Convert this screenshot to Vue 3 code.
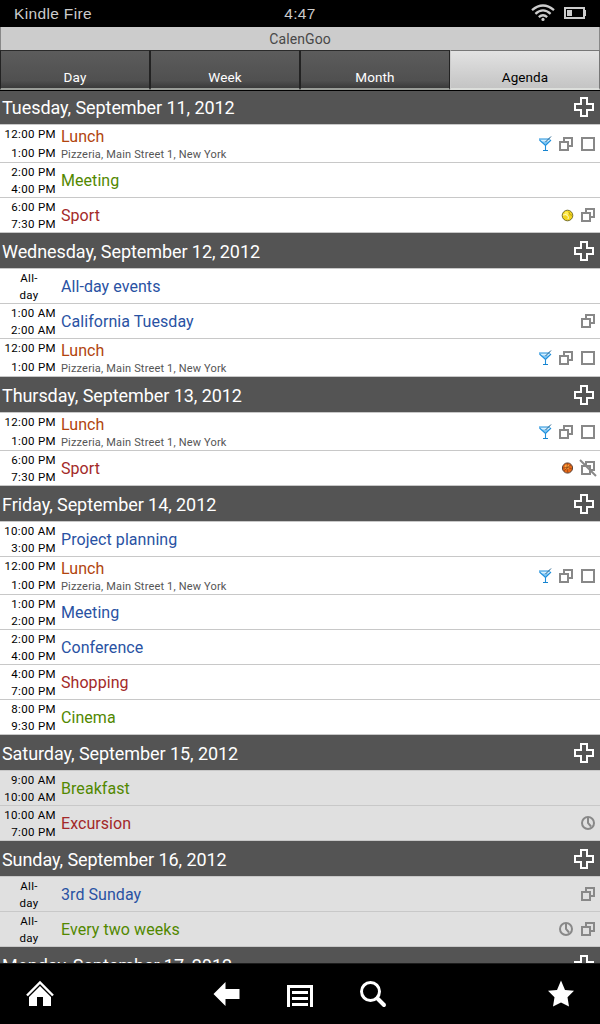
<template>
  <div class="device">
    <div class="status">
      <span class="name">Kindle Fire</span>
      <span class="clock">4:47</span>
      <div class="status-icons">
        <svg class="wifi" viewBox="0 0 24 18" width="24" height="18">
          <g fill="none" stroke="#ccc" stroke-width="2.3">
            <path d="M1 6.2Q12 -3.2 23 6.2" />
            <path d="M4.4 9.8Q12 3 19.6 9.8" />
            <path d="M7.8 13.2Q12 9.4 16.2 13.2" />
          </g>
          <circle cx="12" cy="15.4" r="1.6" fill="#ccc" />
        </svg>
        <svg class="battery" viewBox="0 0 22 12" width="22" height="12">
          <path d="M1 1H20V11H1Z" fill="none" stroke="#ccc" stroke-width="2" />
          <path d="M3 3H8V9H3ZM20 3H22V9H20Z" fill="#ccc" />
        </svg>
      </div>
    </div>
    <div class="title">CalenGoo</div>
    <div class="tabs">
      <div
        v-for="tab in tabs"
        :key="tab"
        class="tab"
        :class="{ active: tab === current }"
        @click="current = tab"
      >
        {{ tab }}
      </div>
    </div>

    <div class="agenda">
      <div v-for="day in days" :key="day.date" class="day" :class="{ weekend: day.weekend }">
        <div class="day-head">
          <span>{{ day.date }}</span>
          <svg viewBox="0 0 20 20" width="20" height="20">
            <path
              d="M7 1H13V7H19V13H13V19H7V13H1V7H7Z"
              fill="none"
              stroke="#fff"
              stroke-width="2"
            />
          </svg>
        </div>
        <div v-for="(ev, i) in day.events" :key="i" class="event" :class="{ tall: ev.place }">
          <div class="time" :class="{ allday: !ev.from }">
            <span>{{ ev.from || "All-" }}</span>
            <span>{{ ev.to || "day" }}</span>
          </div>
          <div class="info">
            <div class="name" :class="ev.color">{{ ev.name }}</div>
            <div v-if="ev.place" class="place">{{ ev.place }}</div>
          </div>
          <div class="icons">
            <svg v-for="icon in ev.icons" :key="icon" viewBox="0 0 14 14" width="14" height="14">
              <!-- cocktail glass -->
              <g v-if="icon === 'drink'">
                <path d="M2 2H14L9 8V13H8V8Z" fill="#d5efff" />
                <path d="M4.5 4.5H12L8.5 8Z" fill="#7cc4f3" />
                <path d="M2 2H13M2.5 3L8.5 8.5L14 3M8.5 8V14" fill="none" stroke="#1e8fdc" stroke-width="1.1" />
                <path d="M6 13.5H11" stroke="#1583cf" />
                <path d="M8.5 5L14 -0.5" stroke="#24618d" />
              </g>
              <g v-else-if="icon === 'copy' || icon === 'nocopy'" fill="none" stroke="#888" stroke-width="2">
                <path d="M1 5H9V13H1Z" />
                <path d="M5 5V1H13V9H9" />
                <path v-if="icon === 'nocopy'" d="M-1 -1L15 15" />
              </g>
              <path v-else-if="icon === 'box'" d="M1 1H13V13H1Z" fill="none" stroke="#888" stroke-width="2" />
              <g v-else-if="icon === 'clock'" fill="none" stroke="#888" stroke-width="2">
                <circle cx="7" cy="7" r="6" />
                <path d="M7 1.5V7L10 10.5" />
              </g>
              <g v-else-if="icon === 'tennis'">
                <circle cx="8.5" cy="7.5" r="5.3" fill="#f3d51c" stroke="#75702f" />
                <circle cx="7.5" cy="5.5" r="2" fill="#ffee58" />
                <path d="M4 7Q7 6 8.5 7.5T9 11" fill="none" stroke="#fffbd0" />
                <path d="M10 4Q10 7 13 7.5" fill="none" stroke="#b29716" stroke-width=".8" />
              </g>
              <g v-else>
                <circle cx="8.5" cy="7" r="5.1" fill="#e76816" stroke="#5e4438" />
                <circle cx="8" cy="6" r="2.4" fill="#ffa640" />
                <path d="M4 7Q8 5 13 8M8.5 2Q7 7 9 12M5 10Q8 6 12 4" fill="none" stroke="#80380f" stroke-width=".6" />
              </g>
            </svg>
          </div>
        </div>
      </div>
    </div>

    <div class="nav">
      <svg viewBox="0 0 28 26" width="28" height="26">
        <path d="M1 14.5L14 1.5L27 14.5" fill="none" stroke="#fff" stroke-width="2.4" />
        <path d="M14 5L25 16V25H17V16H11V25H3V16Z" fill="#fff" />
      </svg>
      <svg class="back" viewBox="0 0 27 26" width="27" height="26">
        <path d="M0.5 13L12.5 1V8H26.5V18H12.5V25Z" fill="#fff" />
      </svg>
      <svg class="menu" viewBox="0 0 26 26" width="26" height="26">
        <path d="M1.5 26V5.5H24.5V26" fill="none" stroke="#fff" stroke-width="3" />
        <path d="M5 11.5H21M5 17.5H21M5 23.5H21" stroke="#fff" stroke-width="3" />
      </svg>
      <svg class="search" viewBox="0 0 26 26" width="26" height="26">
        <circle cx="10.5" cy="10.5" r="9" fill="none" stroke="#fff" stroke-width="3" />
        <path d="M17.5 17.5L24 24" stroke="#fff" stroke-width="4" stroke-linecap="round" />
      </svg>
      <svg class="star" viewBox="0 0 26 26" width="26" height="26">
        <path d="M13 -0.5L17 9L26 9.8L19.5 16.2L21 25.5L13 21.5L5 25.5L6.5 16.2L0 9.8L9 9Z" fill="#fff" />
      </svg>
    </div>
  </div>
</template>

<script setup>
import { ref } from "vue";

const tabs = ["Day", "Week", "Month", "Agenda"];
const current = ref("Agenda");

const lunch = {
  from: "12:00 PM",
  to: "1:00 PM",
  name: "Lunch",
  color: "orange",
  place: "Pizzeria, Main Street 1, New York",
  icons: ["drink", "copy", "box"],
};

const days = [
  {
    date: "Tuesday, September 11, 2012",
    events: [
      lunch,
      { from: "2:00 PM", to: "4:00 PM", name: "Meeting", color: "green" },
      { from: "6:00 PM", to: "7:30 PM", name: "Sport", color: "red", icons: ["tennis", "copy"] },
    ],
  },
  {
    date: "Wednesday, September 12, 2012",
    events: [
      { name: "All-day events", color: "blue" },
      { from: "1:00 AM", to: "2:00 AM", name: "California Tuesday", color: "blue", icons: ["copy"] },
      lunch,
    ],
  },
  {
    date: "Thursday, September 13, 2012",
    events: [
      lunch,
      { from: "6:00 PM", to: "7:30 PM", name: "Sport", color: "red", icons: ["basket", "nocopy"] },
    ],
  },
  {
    date: "Friday, September 14, 2012",
    events: [
      { from: "10:00 AM", to: "3:00 PM", name: "Project planning", color: "blue" },
      lunch,
      { from: "1:00 PM", to: "2:00 PM", name: "Meeting", color: "blue" },
      { from: "2:00 PM", to: "4:00 PM", name: "Conference", color: "blue" },
      { from: "4:00 PM", to: "7:00 PM", name: "Shopping", color: "red" },
      { from: "8:00 PM", to: "9:30 PM", name: "Cinema", color: "green" },
    ],
  },
  {
    date: "Saturday, September 15, 2012",
    weekend: true,
    events: [
      { from: "9:00 AM", to: "10:00 AM", name: "Breakfast", color: "green" },
      { from: "10:00 AM", to: "7:00 PM", name: "Excursion", color: "red", icons: ["clock"] },
    ],
  },
  {
    date: "Sunday, September 16, 2012",
    weekend: true,
    events: [
      { name: "3rd Sunday", color: "blue", icons: ["copy"] },
      { name: "Every two weeks", color: "green", icons: ["clock", "copy"] },
    ],
  },
  { date: "Monday, September 17, 2012", events: [] },
];
</script>

<style>
body {
  background: #000;
}
</style>
<style scoped>
.device {
  width: 600px;
  height: 1024px;
  display: flex;
  flex-direction: column;
  overflow: hidden;
  background: #000;
  font-family: Roboto, sans-serif;
}
svg {
  display: block;
  flex: none;
  overflow: visible;
}
.status {
  height: 27px;
  flex: none;
  display: grid;
  grid-template-columns: 1fr auto 1fr;
  align-items: center;
  padding: 0 14px 0 14px;
  box-sizing: border-box;
  color: #ccc;
  font-family: "Liberation Sans", sans-serif;
  font-size: 15.5px;
  letter-spacing: 0.35px;
}
.status-icons {
  display: flex;
  justify-content: flex-end;
  align-items: center;
  gap: 9px;
}
.wifi {
  margin-top: -1px;
}
.battery {
  margin-top: -2px;
}
.title {
  height: 23px;
  flex: none;
  line-height: 25px;
  background: #ccc;
  color: #484848;
  text-align: center;
  font-size: 14px;
  letter-spacing: 0.1px;
  border-left: 1px solid #888;
  border-right: 1px solid #888;
}
.tabs {
  height: 41px;
  flex: none;
  display: flex;
  box-sizing: border-box;
  border-bottom: 1px solid #000;
}
.tab {
  flex: 1;
  box-sizing: border-box;
  padding-top: 18px;
  line-height: 17px;
  text-align: center;
  font-size: 13.5px;
  letter-spacing: 0.1px;
  color: #fff;
  background: linear-gradient(#5c5c5c, #505050 80%, #3a3a3a);
  border: 1px solid #222;
  border-top: 1px solid #2a2a2a;
  border-bottom: 2px solid #9a9d98;
}
.tab.active {
  color: #000;
  background: linear-gradient(#e2e2e2, #c4c4c4);
  border-color: #777 #777 #dcdedb #ccc;
}
.agenda {
  height: 872px;
  flex: none;
  overflow: hidden;
}
.day-head {
  height: 35px;
  display: flex;
  align-items: center;
  justify-content: space-between;
  padding: 0 6px 0 2px;
  background: #545454;
  border-bottom: 1px solid #c8c8c8;
  color: #fff;
  font-size: 18px;
  letter-spacing: -0.07px;
}
.day-head span {
  padding-top: 2px;
}
.day:first-child .day-head {
  margin-top: -2px;
}
.event {
  height: 34px;
  display: flex;
  align-items: center;
  padding-right: 5px;
  background: #fff;
  border-bottom: 1px solid #c8c8c8;
}
.event.tall {
  height: 37px;
}
.weekend .event {
  background: #e0e0e0;
}
.time {
  width: 56px;
  height: 34px;
  display: flex;
  flex-direction: column;
  box-sizing: border-box;
  padding-top: 1px;
  text-align: right;
  font-size: 11.5px;
  line-height: 17px;
  letter-spacing: 0.35px;
  color: #000;
}
.tall .time {
  height: 37px;
  justify-content: space-between;
}
.allday {
  padding-left: 2px;
  text-align: center;
}
.info {
  flex: 1;
  padding: 2px 0 0 5px;
}
.info .name {
  font-size: 16px;
  line-height: 20px;
  letter-spacing: 0.06px;
}
.place {
  font-size: 11px;
  line-height: 16px;
  letter-spacing: 0.17px;
  color: #555;
}
.blue {
  color: #2952a3;
}
.green {
  color: #528800;
}
.red {
  color: #a32929;
}
.orange {
  color: #b1440e;
}
.icons {
  display: flex;
  gap: 8px;
}
.nav {
  flex: 1;
  display: flex;
  align-items: flex-start;
  padding: 17px 26px 0;
  border-top: 1px solid #1c1c1c;
}
.back {
  margin-left: 159px;
}
.menu {
  margin-left: 47px;
}
.search {
  margin-left: 47px;
}
.star {
  margin-left: auto;
}
</style>
